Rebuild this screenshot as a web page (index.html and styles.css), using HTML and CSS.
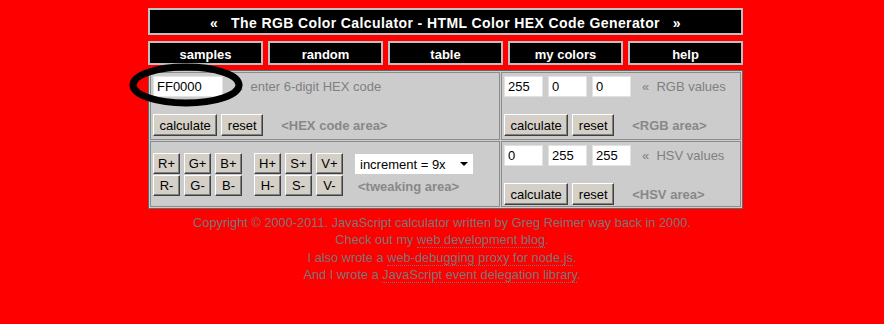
FILE: index.html
```html
<!DOCTYPE html>
<html lang="en">
<head>
    <meta charset="UTF-8">
    <title>The RGB Color Calculator - HTML Color HEX Code Generator</title>
    <link rel="stylesheet" href="styles.css">
</head>
<body>
    <div class="page">
        <div class="title">«   The RGB Color Calculator - HTML Color HEX Code Generator   »</div>

        <ul class="nav">
            <li>samples</li>
            <li>random</li>
            <li>table</li>
            <li>my colors</li>
            <li>help</li>
        </ul>

        <div class="panel">
            <div class="cell">
                <div class="line">
                    <input class="field hex" value="FF0000">
                    <span class="hint hex-hint">«  enter 6-digit HEX code</span>
                </div>
                <div class="line">
                    <button class="button">calculate</button>
                    <button class="button">reset</button>
                    <span class="area">&lt;HEX code area&gt;</span>
                </div>
            </div>

            <div class="cell">
                <div class="line">
                    <input class="field num" value="255">
                    <input class="field num" value="0">
                    <input class="field num" value="0">
                    <span class="hint">«  RGB values</span>
                </div>
                <div class="line">
                    <button class="button">calculate</button>
                    <button class="button">reset</button>
                    <span class="area">&lt;RGB area&gt;</span>
                </div>
            </div>

            <div class="cell tweak">
                <div class="tweak-grid">
                    <button class="button small">R+</button>
                    <button class="button small">G+</button>
                    <button class="button small">B+</button>
                    <button class="button small">R-</button>
                    <button class="button small">G-</button>
                    <button class="button small">B-</button>
                </div>
                <div class="tweak-grid">
                    <button class="button small">H+</button>
                    <button class="button small">S+</button>
                    <button class="button small">V+</button>
                    <button class="button small">H-</button>
                    <button class="button small">S-</button>
                    <button class="button small">V-</button>
                </div>
                <div class="tweak-side">
                    <div class="select">
                        <select>
                            <option>increment = 9x</option>
                        </select>
                    </div>
                    <span class="area tweak-area">&lt;tweaking area&gt;</span>
                </div>
            </div>

            <div class="cell hsv">
                <div class="line">
                    <input class="field num" value="0">
                    <input class="field num" value="255">
                    <input class="field num" value="255">
                    <span class="hint">«  HSV values</span>
                </div>
                <div class="line">
                    <button class="button">calculate</button>
                    <button class="button">reset</button>
                    <span class="area">&lt;HSV area&gt;</span>
                </div>
            </div>
        </div>
    </div>

    <div class="footer">
        Copyright © 2000-2011. JavaScript calculator written by Greg Reimer way back in 2000.<br>
        Check out my <a href="#">web development blog</a>.<br>
        I also wrote a <a href="#">web-debugging proxy for node.js</a>.<br>
        And I wrote a <a href="#">JavaScript event delegation library</a>.
    </div>

    <!-- hand-drawn circle round the hex field -->
    <svg class="circle" width="122" height="52" viewBox="0 0 122 52">
        <ellipse cx="58" cy="25" rx="53" ry="18" fill="none" stroke="#000" stroke-width="7"/>
    </svg>
</body>
</html>
```

FILE: styles.css
```css
body {
    margin: 0;
    padding-top: 8px;
    background: #ff0000;
    font-family: "Liberation Sans", Arial, sans-serif;
    font-size: 13px;
}
.page {
    width: 595px;
    margin-left: 148px;
}
.title {
    height: 21px;
    padding-top: 2px;
    border: 2px solid #c0c0c0;
    background: #000;
    color: #fff;
    font-weight: bold;
    font-size: 14px;
    line-height: 22px;
    letter-spacing: 0.4px;
    text-align: center;
    white-space: pre;
}
.nav {
    display: flex;
    gap: 5px;
    margin: 6px 0 0;
    padding: 0;
    list-style: none;
}
.nav li {
    flex: 1;
    height: 19px;
    padding-top: 1px;
    border: 2px solid #c0c0c0;
    background: #000;
    color: #fff;
    font-weight: bold;
    line-height: 21px;
    text-align: center;
}
.panel {
    margin-top: 5px;
    display: grid;
    grid-template-columns: 350px 1fr;
    grid-template-rows: 68px 66px;
    gap: 1px;
    padding: 1px;
    border: 1px solid #666;
    background: #ccc;
}
.cell {
    border: 1px solid #8c8c8c;
    padding: 3px 2px;
    display: flex;
    flex-direction: column;
    justify-content: space-between;
}
.cell.hsv {
    padding-bottom: 1px;
}
.line {
    display: flex;
    align-items: center;
    gap: 4px;
}
.field {
    box-sizing: border-box;
    height: 21px;
    margin: 0;
    padding: 0 3px;
    border: 1px solid #e2e2e2;
    background: #fff;
    font: 13px "Liberation Sans", Arial, sans-serif;
    color: #000;
}
.field.hex {
    width: 70px;
}
.field.num {
    width: 39px;
    margin-right: 1px;
}
.hint {
    color: #808080;
    white-space: pre;
    margin-left: 6px;
}
.hint.hex-hint {
    margin-left: 9px;
}
.area {
    color: #888;
    font-weight: bold;
    margin-left: 14px;
}
.button {
    box-sizing: border-box;
    height: 22px;
    margin: 0;
    padding: 0 5.5px;
    background: #d4d0c8;
    border: 1px solid;
    border-color: #fff #404040 #404040 #fff;
    box-shadow: inset -1px -1px #808080;
    font: 13px "Liberation Sans", Arial, sans-serif;
    color: #000;
}
.cell.tweak {
    flex-direction: row;
    align-items: center;
    justify-content: flex-start;
}
.tweak-grid {
    display: grid;
    grid-template-columns: repeat(3, 27px);
    column-gap: 4px;
    row-gap: 1px;
    margin-right: 12px;
}
.button.small {
    width: 27px;
    height: 21px;
    padding: 0;
}
.tweak-side {
    display: flex;
    flex-direction: column;
    gap: 5px;
}
.select {
    position: relative;
    width: 118px;
    height: 20px;
}
.select select {
    width: 100%;
    height: 100%;
    margin: 0;
    padding: 0 0 0 5px;
    border: none;
    border-radius: 0;
    background: #fff;
    appearance: none;
    font: 13px "Liberation Sans", Arial, sans-serif;
    color: #000;
}
.select::after {
    content: "";
    position: absolute;
    right: 5px;
    top: 8px;
    border-left: 4px solid transparent;
    border-right: 4px solid transparent;
    border-top: 4px solid #000;
}
.tweak-area {
    margin-left: 3px;
    line-height: 15px;
}
.footer {
    margin-top: 5px;
    text-align: center;
    font-size: 12.8px;
    line-height: 17.3px;
    color: #777;
}
.footer a {
    color: inherit;
    text-decoration: none;
    border-bottom: 1px dotted #777;
}
.circle {
    position: absolute;
    left: 128px;
    top: 60px;
}
```
